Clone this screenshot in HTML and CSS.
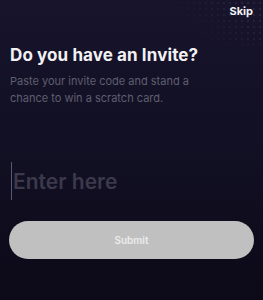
FILE: index.html
```html
<!DOCTYPE html>
<html lang="en">
<head>
  <meta charset="UTF-8">
  <meta name="viewport" content="width=device-width, initial-scale=1.0">
  <title>Invite</title>
  <link rel="stylesheet" href="styles.css">
</head>
<body>
  <div class="screen">
    <div class="dots"></div>
    <div class="top">
      <a class="skip" href="#">Skip</a>
    </div>

    <h1 class="title">Do you have an Invite?</h1>
    <p class="subtitle">Paste your invite code and stand a chance to win a scratch card.</p>

    <div class="field">
      <span class="caret"></span>
      <input type="text" class="code" placeholder="Enter here">
    </div>

    <button type="button" class="submit">Submit</button>
  </div>
</body>
</html>
```

FILE: styles.css
```css
html,
body {
  margin: 0;
  padding: 0;
}

body {
  background: #0c0a18;
  font-family: Inter, "Noto Sans", sans-serif;
}

.screen {
  position: relative;
  width: 263px;
  height: 300px;
  box-sizing: border-box;
  padding: 0 9px 0 10px;
  background: linear-gradient(180deg, #17142c 0%, #121024 45%, #0c0a18 100%);
  overflow: hidden;
}

.dots {
  position: absolute;
  top: 0;
  right: 0;
  width: 90px;
  height: 45px;
  background-image: radial-gradient(circle, rgba(120, 118, 150, 0.35) 0.6px, transparent 0.8px);
  background-size: 6px 6px;
  -webkit-mask-image: linear-gradient(225deg, #000 20%, transparent 75%);
  mask-image: linear-gradient(225deg, #000 20%, transparent 75%);
}

.top {
  position: relative;
  display: flex;
  justify-content: flex-end;
  padding-top: 4px;
  padding-right: 1px;
}

.skip {
  color: #f2f2f4;
  font-size: 11px;
  font-weight: 700;
  text-decoration: none;
}

.title {
  margin: 27px 0 0;
  color: #f1f1f3;
  font-size: 17px;
  font-weight: 700;
  letter-spacing: 0.1px;
}

.subtitle {
  margin: 8px 0 0;
  width: 190px;
  color: #5f5e6e;
  font-size: 11px;
  line-height: 17px;
}

.field {
  display: flex;
  align-items: center;
  margin-top: 55px;
  height: 38px;
}

.caret {
  width: 1px;
  height: 38px;
  margin-left: 1px;
  background: #5a586c;
}

.code {
  flex: 1;
  min-width: 0;
  border: none;
  outline: none;
  background: transparent;
  padding: 0 0 0 1px;
  font-family: inherit;
  font-size: 21px;
  font-weight: 600;
  color: #d0d0d8;
}

.code::placeholder {
  color: #3b394b;
}

.submit {
  display: block;
  width: 245px;
  height: 38px;
  margin: 21px 0 0 -1px;
  border: none;
  border-radius: 19px;
  background: #c0c0c0;
  color: #ececec;
  font-family: inherit;
  font-size: 10px;
  font-weight: 600;
  cursor: pointer;
}
```
